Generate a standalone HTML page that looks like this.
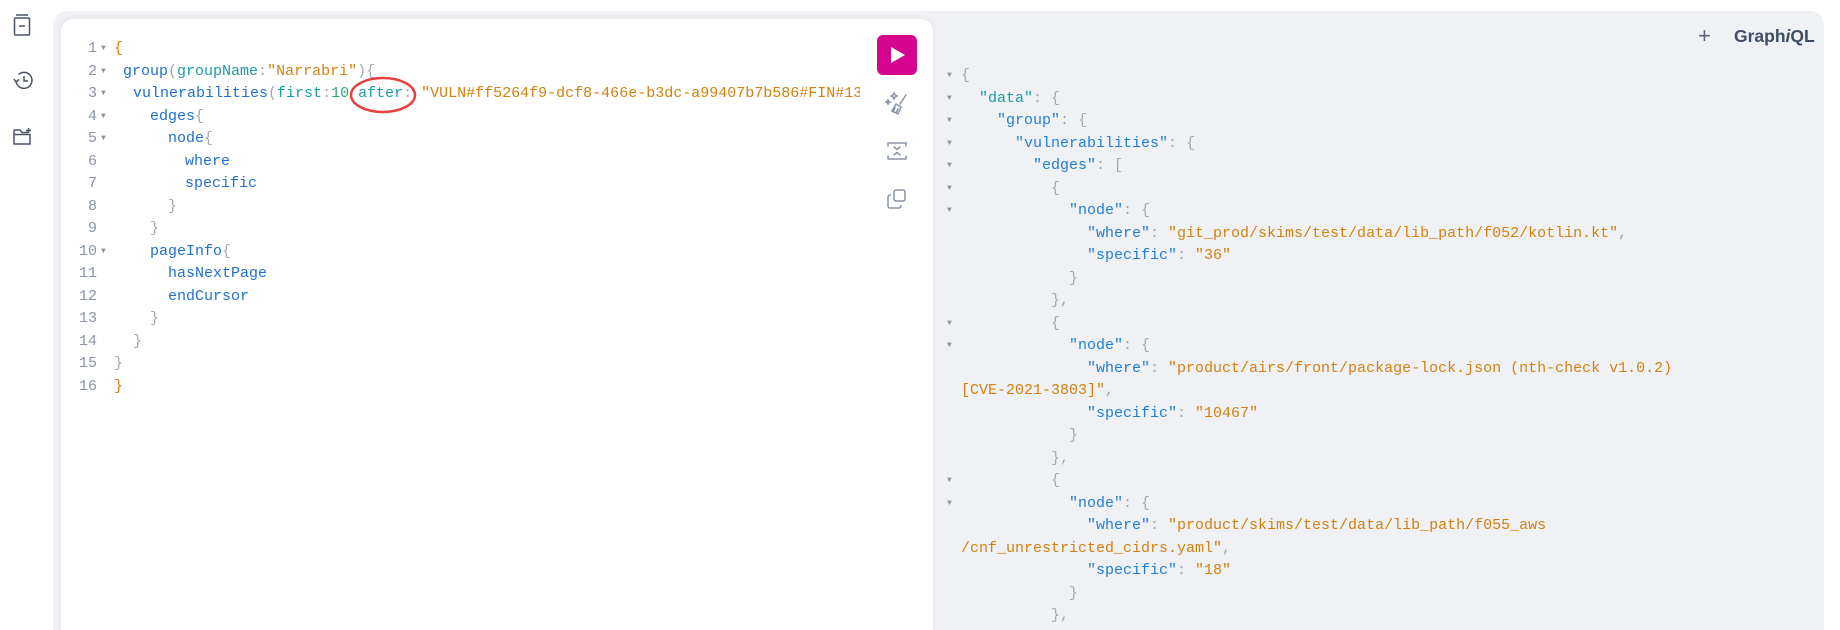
<!DOCTYPE html>
<html><head><meta charset="utf-8"><style>
*{margin:0;padding:0;box-sizing:border-box}
html{width:1840px;height:630px;overflow:hidden}
body{width:1840px;height:630px;background:#fff;position:relative;overflow:hidden;font-family:"Liberation Mono",monospace}
.outer{position:absolute;left:53px;top:11px;width:1771px;height:619px;background:#f0f1f4;border-radius:14px 14px 0 0}
.card{position:absolute;left:61px;top:19px;width:872px;height:611px;background:#fff;border-radius:12px 12px 0 0;box-shadow:0 0 6px rgba(60,70,90,.08)}
.l{position:absolute;font-size:15px;line-height:22.5px;height:22.5px;white-space:pre}
.n{position:absolute;font-size:15px;line-height:22.5px;color:#8a93a6;text-align:right;width:40px;left:57px}
.a{position:absolute;font-size:8px;line-height:22.5px;color:#8a93a6}
.f{color:#1f6fd0}.g{color:#1a9ba3}.s{color:#d4800f}.p{color:#a3a8b2}.o{color:#d4800f}
.k{color:#1f7fd6}.t{color:#1a9ba3}
svg{position:absolute}
</style></head><body>
<div class="outer"></div>
<div class="card"></div>

<svg style="left:12px;top:13px" width="20" height="24" viewBox="0 0 20 24" fill="none" stroke="#4a5468" stroke-width="1.5"><rect x="2.5" y="5" width="15" height="17" rx="1"/><path d="M4 2h12M7 13h6"/></svg>
<svg style="left:11px;top:68px" width="24" height="24" viewBox="0 0 24 24" fill="none" stroke="#4a5468" stroke-width="1.5"><path d="M5 13a8 8 0 1 0 2.5-6.5"/><path d="M3 11l2 3 3-2.5"/><path d="M13 8v5h4"/></svg>
<svg style="left:11px;top:124px" width="24" height="24" viewBox="0 0 24 24" fill="none" stroke="#4a5468" stroke-width="1.5"><path d="M3 6h6l2 2.5h6M3 6v14h16v-9.5H3"/><path d="M17.5 4v5M15 6.5h5"/></svg>

<div id="ed"></div>
<svg style="left:348px;top:75px" width="70" height="40"><ellipse cx="35" cy="20" rx="32" ry="17" fill="none" stroke="#e8403a" stroke-width="2.5"/></svg>

<div style="position:absolute;left:877px;top:35px;width:40px;height:40px;background:#d6058f;border-radius:6px"></div>
<svg style="left:877px;top:35px" width="40" height="40"><path d="M14 12l14 8-14 8z" fill="#fff"/></svg>
<svg style="left:884px;top:90px" width="28" height="28" viewBox="0 0 28 28" fill="none" stroke="#8a93a6" stroke-width="1.5" stroke-linecap="round"><path d="M22 5l-6 9M12 14l5 3-3 7-6-3z M9 22l2-4M12 23l2-4"/><path d="M10 3l1 2 2 1-2 1-1 2-1-2-2-1 2-1zM4 10l.7 1.3 1.3.7-1.3.7L4 14l-.7-1.3L2 12l1.3-.7z"/></svg>
<svg style="left:885px;top:139px" width="24" height="24" viewBox="0 0 24 24" fill="none" stroke="#8a93a6" stroke-width="1.5" stroke-linecap="round"><path d="M3 7V4h18v3M3 17v3h18v-3M9 8l3 2.5 3-2.5M9 16l3-2.5 3 2.5"/></svg>
<svg style="left:885px;top:187px" width="24" height="24" viewBox="0 0 24 24" fill="none" stroke="#8a93a6" stroke-width="1.5"><rect x="9" y="3" width="11" height="11" rx="2"/><path d="M6 8H5a2 2 0 0 0-2 2v9a2 2 0 0 0 2 2h9a2 2 0 0 0 2-2v-1"/></svg>

<div style="position:absolute;left:1698px;top:23px;font:22px 'Liberation Sans',sans-serif;color:#5a6478">+</div>
<div style="position:absolute;left:1734px;top:26px;font:600 17.5px 'Liberation Sans',sans-serif;color:#3f4d66">Graph<i>i</i>QL</div>

<div id="js"></div>

<script>
var ed=[
[114,'<span class="o">{</span>',1],
[123,'<span class="f">group</span><span class="p">(</span><span class="g">groupName</span><span class="p">:</span><span class="s">"Narrabri"</span><span class="p">){</span>',1],
[133,'<span class="f">vulnerabilities</span><span class="p">(</span><span class="g">first</span><span class="p">:</span><span class="g" style="color:#2aa876">10</span> <span class="g">after</span><span class="p">:</span> <span class="s">"VULN#ff5264f9-dcf8-466e-b3dc-a99407b7b586#FIN#13</span>',1],
[150,'<span class="f">edges</span><span class="p">{</span>',1],
[168,'<span class="f">node</span><span class="p">{</span>',1],
[185,'<span class="f">where</span>',0],
[185,'<span class="f">specific</span>',0],
[168,'<span class="p">}</span>',0],
[150,'<span class="p">}</span>',0],
[150,'<span class="f">pageInfo</span><span class="p">{</span>',1],
[168,'<span class="f">hasNextPage</span>',0],
[168,'<span class="f">endCursor</span>',0],
[150,'<span class="p">}</span>',0],
[133,'<span class="p">}</span>',0],
[114,'<span class="p">}</span>',0],
[114,'<span class="o">}</span>',0]];
var h='';
ed.forEach(function(e,i){var y=38+i*22.5;
h+='<div class="n" style="top:'+y+'px">'+(i+1)+'</div>';
if(e[2])h+='<div class="a" style="left:101px;top:'+y+'px">&#9660;</div>';
h+='<div class="l" style="left:'+e[0]+'px;top:'+y+'px;max-width:'+(860-e[0])+'px;overflow:hidden">'+e[1]+'</div>';});
document.getElementById('ed').innerHTML=h;
function K(k,c){return '<span class="'+(c||'k')+'">"'+k+'"</span><span class="p">: </span>';}
function S(s){return '<span class="s">"'+s+'"</span>';}
var P=function(x){return '<span class="p">'+x+'</span>';};
var js=[
[0,P('{'),1],[1,K('data','t')+P('{'),1],[2,K('group')+P('{'),1],[3,K('vulnerabilities')+P('{'),1],[4,K('edges')+P('['),1],
[5,P('{'),1],[6,K('node')+P('{'),1],[7,K('where')+S('git_prod/skims/test/data/lib_path/f052/kotlin.kt')+P(','),0],
[7,K('specific')+S('36'),0],[6,P('}'),0],[5,P('},'),0],
[5,P('{'),1],[6,K('node')+P('{'),1],[7,K('where')+'<span class="s">"product/airs/front/package-lock.json (nth-check v1.0.2)</span>',0],
[0,'<span class="s">[CVE-2021-3803]"</span>'+P(','),0],[7,K('specific')+S('10467'),0],[6,P('}'),0],[5,P('},'),0],
[5,P('{'),1],[6,K('node')+P('{'),1],[7,K('where')+'<span class="s">"product/skims/test/data/lib_path/f055_aws</span>',0],
[0,'<span class="s">/cnf_unrestricted_cidrs.yaml"</span>'+P(','),0],[7,K('specific')+S('18'),0],[6,P('}'),0],[5,P('},'),0]];
h='';
js.forEach(function(e,i){var y=65+i*22.5;
if(e[2])h+='<div class="a" style="left:947px;top:'+y+'px">&#9660;</div>';
h+='<div class="l" style="left:'+(961+e[0]*18)+'px;top:'+y+'px">'+e[1]+'</div>';});
document.getElementById('js').innerHTML=h;
</script>
</body></html>
